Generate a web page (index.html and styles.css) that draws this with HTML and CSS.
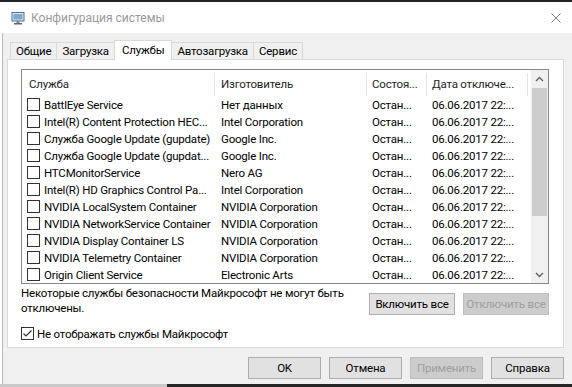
FILE: index.html
```html
<!DOCTYPE html>
<html lang="ru">
<head>
<meta charset="utf-8">
<title>Конфигурация системы</title>
<link rel="stylesheet" href="styles.css">
</head>
<body>
<div class="screen">
  <div class="topbar"></div>
  <div class="titlebar">
    <svg class="app-icon" viewBox="0 0 14 14">
      <rect x="1" y="1.5" width="12" height="8.5" fill="#dbe8f4" stroke="#4a6f9c" stroke-width="1"/>
      <rect x="2.5" y="3" width="9" height="5.5" fill="#7fa6cf"/>
      <rect x="5.5" y="10" width="3" height="2" fill="#7d8893"/>
      <rect x="3" y="12" width="8" height="1.5" fill="#5c6670"/>
    </svg>
    <span class="title">Конфигурация системы</span>
    <svg class="close" viewBox="0 0 10 10">
      <path d="M0.5 0.5 L9.5 9.5 M9.5 0.5 L0.5 9.5" stroke="#7a7a7a" stroke-width="1" fill="none"/>
    </svg>
  </div>
  <div class="body">
    <div class="tabs">
      <div class="tab">Общие</div>
      <div class="tab">Загрузка</div>
      <div class="tab active">Службы</div>
      <div class="tab">Автозагрузка</div>
      <div class="tab">Сервис</div>
    </div>
    <div class="panel">
      <div class="list">
        <div class="lv">
          <div class="lv-head">
            <div class="hcell c1">Служба</div>
            <div class="hcell c2">Изготовитель</div>
            <div class="hcell c3">Состоя...</div>
            <div class="hcell c4">Дата отключе...</div>
          </div>
          <div class="row"><div class="cell c1"><span class="cb"></span>BattlEye Service</div><div class="cell c2">Нет данных</div><div class="cell c3">Остан...</div><div class="cell c4">06.06.2017 22:...</div></div>
          <div class="row"><div class="cell c1"><span class="cb"></span>Intel(R) Content Protection HEC...</div><div class="cell c2">Intel Corporation</div><div class="cell c3">Остан...</div><div class="cell c4">06.06.2017 22:...</div></div>
          <div class="row"><div class="cell c1"><span class="cb"></span>Служба Google Update (gupdate)</div><div class="cell c2">Google Inc.</div><div class="cell c3">Остан...</div><div class="cell c4">06.06.2017 22:...</div></div>
          <div class="row"><div class="cell c1"><span class="cb"></span>Служба Google Update (gupdat...</div><div class="cell c2">Google Inc.</div><div class="cell c3">Остан...</div><div class="cell c4">06.06.2017 22:...</div></div>
          <div class="row"><div class="cell c1"><span class="cb"></span>HTCMonitorService</div><div class="cell c2">Nero AG</div><div class="cell c3">Остан...</div><div class="cell c4">06.06.2017 22:...</div></div>
          <div class="row"><div class="cell c1"><span class="cb"></span>Intel(R) HD Graphics Control Pa...</div><div class="cell c2">Intel Corporation</div><div class="cell c3">Остан...</div><div class="cell c4">06.06.2017 22:...</div></div>
          <div class="row"><div class="cell c1"><span class="cb"></span>NVIDIA LocalSystem Container</div><div class="cell c2">NVIDIA Corporation</div><div class="cell c3">Остан...</div><div class="cell c4">06.06.2017 22:...</div></div>
          <div class="row"><div class="cell c1"><span class="cb"></span>NVIDIA NetworkService Container</div><div class="cell c2">NVIDIA Corporation</div><div class="cell c3">Остан...</div><div class="cell c4">06.06.2017 22:...</div></div>
          <div class="row"><div class="cell c1"><span class="cb"></span>NVIDIA Display Container LS</div><div class="cell c2">NVIDIA Corporation</div><div class="cell c3">Остан...</div><div class="cell c4">06.06.2017 22:...</div></div>
          <div class="row"><div class="cell c1"><span class="cb"></span>NVIDIA Telemetry Container</div><div class="cell c2">NVIDIA Corporation</div><div class="cell c3">Остан...</div><div class="cell c4">06.06.2017 22:...</div></div>
          <div class="row"><div class="cell c1"><span class="cb"></span>Origin Client Service</div><div class="cell c2">Electronic Arts</div><div class="cell c3">Остан...</div><div class="cell c4">06.06.2017 22:...</div></div>
        </div>
        <div class="scroll">
          <div class="sbtn">
            <svg viewBox="0 0 9 6" class="chev"><path d="M1 5 L4.5 1.5 L8 5" stroke="#606060" stroke-width="1.4" fill="none"/></svg>
          </div>
          <div class="thumb"></div>
          <div class="track"></div>
          <div class="sbtn">
            <svg viewBox="0 0 9 6" class="chev"><path d="M1 1 L4.5 4.5 L8 1" stroke="#606060" stroke-width="1.4" fill="none"/></svg>
          </div>
        </div>
      </div>
      <div class="info">
        <p class="note">Некоторые службы безопасности Майкрософт не могут быть<br>отключены.</p>
        <div class="info-btns">
          <button class="btn wide">Включить все</button>
          <button class="btn wide" disabled>Отключить все</button>
        </div>
      </div>
      <label class="hide-ms"><span class="cb checked"><svg viewBox="0 0 11 11" class="tick"><path d="M1.5 5.5 L4 8 L9.5 2.5" stroke="#333" stroke-width="1.2" fill="none"/></svg></span>Не отображать службы Майкрософт</label>
    </div>
    <div class="footer">
      <button class="btn">OK</button>
      <button class="btn">Отмена</button>
      <button class="btn" disabled>Применить</button>
      <button class="btn">Справка</button>
    </div>
  </div>
  <div class="bottombar"><div class="bb-left"></div><div class="bb-right"></div></div>
</div>
</body>
</html>
```

FILE: styles.css
```css
* { box-sizing: border-box; }
html, body { margin: 0; padding: 0; }
body {
  width: 572px;
  height: 387px;
  overflow: hidden;
  background: #fff;
  font-family: Roboto, "Liberation Sans", Arial, sans-serif;
  font-size: 11.5px;
  letter-spacing: -0.2px;
  color: #000;
}
.screen { display: flex; flex-direction: column; height: 387px; }
.topbar { height: 2px; background: #262626; flex: none; }
.titlebar {
  height: 31px;
  flex: none;
  display: flex;
  align-items: center;
  padding-left: 11px;
  background: #fff;
}
.app-icon { width: 14px; height: 14px; flex: none; }
.title { margin-left: 6px; font-size: 12px; letter-spacing: 0; color: #9a9a9a; white-space: nowrap; }
.close { margin-left: auto; margin-right: 11px; width: 10px; height: 10px; flex: none; }

.body {
  flex: 1;
  background: #f0f0f0;
  margin-left: 2px;
  border-left: 1px solid #b9b9b9;
  padding-top: 7px;
}
.tabs {
  display: flex;
  align-items: flex-end;
  height: 19px;
  margin-left: 7px;
  position: relative;
  z-index: 1;
}
.tab {
  height: 17px;
  padding: 0 5px;
  border: 1px solid #d9d9d9;
  border-bottom: none;
  margin-left: -1px;
  line-height: 16px;
  background: #f0f0f0;
  white-space: nowrap;
}
.tab:first-child { margin-left: 0; }
.tab.active {
  height: 20px;
  margin-bottom: -1px;
  background: #fff;
  line-height: 18px;
  padding: 0 7px;
}
.panel {
  margin-left: 4px;
  width: 557px;
  height: 289px;
  background: #fff;
  border: 1px solid #d9d9d9;
  padding: 9px 14px 0 13px;
}
.list {
  display: flex;
  height: 215px;
  border: 1px solid #828790;
}
.lv { flex: 1; overflow: hidden; }
.lv-head { display: flex; height: 26px; align-items: flex-end; }
.hcell {
  height: 23px;
  line-height: 22px;
  border-right: 1px solid #e5e5e5;
  padding-left: 6px;
  white-space: nowrap;
  overflow: hidden;
  color: #1e1e1e;
  flex: none;
}
.c1 { width: 193px; }
.c2 { width: 152px; }
.c3 { width: 60px; }
.c4 { width: 101px; }
.hcell.c1 { padding-left: 7px; }
.hcell.c3, .hcell.c4 { padding-left: 5px; }
.row { display: flex; height: 17px; align-items: center; }
.cell { padding-left: 6px; white-space: nowrap; overflow: hidden; flex: none; }
.row .c1 { padding-left: 5px; display: flex; align-items: center; }
.row .c3, .row .c4 { padding-left: 5px; }
.cb {
  width: 13px;
  height: 13px;
  border: 1px solid #333;
  background: #fff;
  margin-right: 4px;
  flex: none;
  display: block;
}
.scroll { width: 17px; flex: none; background: #f0f0f0; display: flex; flex-direction: column; }
.sbtn { height: 17px; display: flex; align-items: center; justify-content: center; flex: none; }
.chev { width: 9px; height: 6px; }
.thumb { height: 128px; margin: 1px 1px 0; background: #cdcdcd; flex: none; }
.track { flex: 1; }

.info { display: flex; margin-top: 2px; }
.note { margin: 0; line-height: 15px; white-space: nowrap; }
.info-btns { margin-left: auto; margin-top: 7px; display: flex; gap: 8px; }
.btn {
  width: 73px;
  height: 22px;
  border: 1px solid #adadad;
  background: #e1e1e1;
  font-family: inherit;
  font-size: 11.5px;
  letter-spacing: -0.2px;
  color: #000;
  padding: 0;
  margin: 0;
  white-space: nowrap;
}
.btn.wide { width: 86px; }
.btn:disabled { background: #cccccc; border-color: #bfbfbf; color: #a0a0a0; }
.hide-ms { display: flex; align-items: center; height: 15px; margin-top: 10px; }
.hide-ms .cb { margin-right: 3px; display: flex; align-items: center; justify-content: center; }
.tick { width: 11px; height: 11px; }

.footer { display: flex; justify-content: flex-end; gap: 8px; margin-top: 9px; padding-right: 8px; }
.bottombar { height: 3px; flex: none; display: flex; }
.bb-left { width: 167px; background: #c9c9c9; }
.bb-right { flex: 1; background: #262626; }
```
